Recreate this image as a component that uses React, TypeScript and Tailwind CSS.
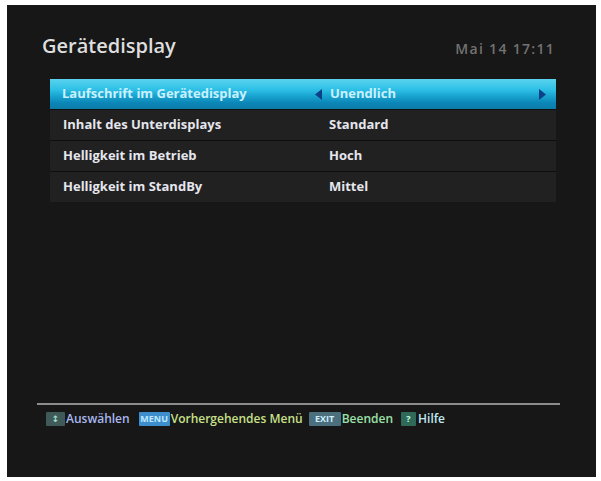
import React from "react";

type Row = { label: string; value: string };

const rows: Row[] = [
  { label: "Laufschrift im Gerätedisplay", value: "Unendlich" },
  { label: "Inhalt des Unterdisplays", value: "Standard" },
  { label: "Helligkeit im Betrieb", value: "Hoch" },
  { label: "Helligkeit im StandBy", value: "Mittel" },
];

function Arrow({ dir }: { dir: "left" | "right" }) {
  return (
    <svg width="7" height="11" viewBox="0 0 7 11" className="block">
      {dir === "left" ? (
        <path d="M7 0 L0 5.5 L7 11 Z" fill="#0b3f86" />
      ) : (
        <path d="M0 0 L7 5.5 L0 11 Z" fill="#0b3f86" />
      )}
    </svg>
  );
}

function Key({ children, cls }: { children: React.ReactNode; cls: string }) {
  return (
    <span
      className={`inline-flex h-[14px] items-center justify-center rounded-[1px] text-[9px] font-bold leading-none ${cls}`}
    >
      {children}
    </span>
  );
}

export default function App() {
  return (
    <div
      className="h-[481px] w-[601px] bg-white pb-[4px] pl-[7px] pr-[5px] pt-[5px]"
      style={{ fontFamily: '"Open Sans", "DejaVu Sans", sans-serif' }}
    >
      <div className="flex h-full flex-col bg-[#171717]">
        {/* header */}
        <div className="flex items-end justify-between pl-[35px] pr-[41px] pt-[28px]">
          <h1 className="text-[20px] font-semibold leading-[26px] text-[#dedede]">
            Gerätedisplay
          </h1>
          <span className="pb-[1px] text-[14px] font-semibold leading-[18px] tracking-[1.3px] text-[#727272]">
            Mai 14 17:11
          </span>
        </div>

        {/* settings list */}
        <div className="ml-[43px] mt-[20px] flex w-[506px] flex-col bg-[#0f0f0f]">
          {rows.map((r, i) =>
            i === 0 ? (
              <div
                key={r.label}
                className="flex h-[30px] items-center bg-[linear-gradient(to_bottom,#5ad3ee_0%,#2ec0e6_35%,#1aa6d2_55%,#0b86b6_80%,#0c7ca8_100%)] text-[13px] font-bold text-[#c9f1ff]"
              >
                <span className="w-[265px] pl-[12px]">{r.label}</span>
                <span className="flex w-[15px] justify-start">
                  <Arrow dir="left" />
                </span>
                <span className="flex-1">{r.value}</span>
                <span className="pr-[10px]">
                  <Arrow dir="right" />
                </span>
              </div>
            ) : (
              <div
                key={r.label}
                className="mt-[1px] flex h-[30px] items-center bg-[#212121] text-[13px] font-bold text-[#e6e6ee]"
              >
                <span className="w-[279px] pl-[13px]">{r.label}</span>
                <span className="flex-1">{r.value}</span>
              </div>
            )
          )}
        </div>

        <div className="flex-1" />

        {/* footer hints */}
        <div className="pb-[51px] pl-[30px] pr-[36px]">
          <div className="h-[2px] bg-[#8c8c8c]" />
          <div className="mt-[6px] flex items-center pl-[9px] text-[12px] font-semibold leading-[15px]">
            <Key cls="bg-[#3f5a58] text-[#9fe0d0] w-[19px]">↕</Key>
            <span className="ml-[1px] text-[#a9b8ee]">Auswählen</span>
            <Key cls="ml-[9px] bg-[#3c8fcc] text-[#bfe8ff] w-[31px]">MENU</Key>
            <span className="ml-[1px] text-[#c8e08a]">Vorhergehendes Menü</span>
            <Key cls="ml-[6px] bg-[#4b6f7c] text-[#cfeeff] w-[32px]">EXIT</Key>
            <span className="ml-[1px] text-[#9be0a8]">Beenden</span>
            <Key cls="ml-[8px] bg-[#2f6a58] text-[#c8ffe8] w-[15px]">?</Key>
            <span className="ml-[2px] text-[#bfe8f0]">Hilfe</span>
          </div>
        </div>
      </div>
    </div>
  );
}
